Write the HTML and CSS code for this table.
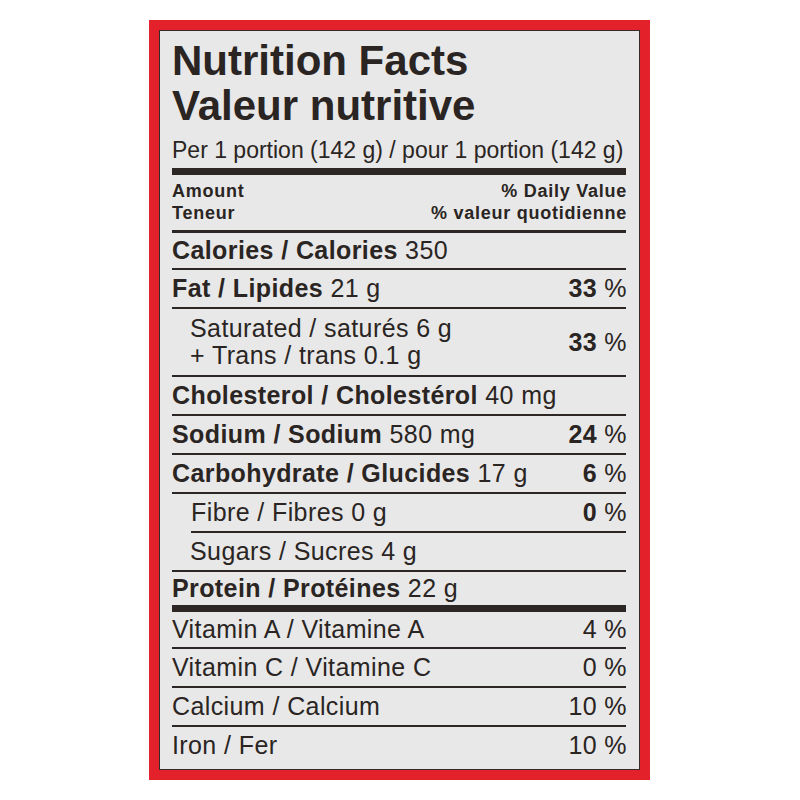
FILE: index.html
```html
<!DOCTYPE html>
<html lang="en">
<head>
<meta charset="utf-8">
<title>Nutrition Facts</title>
<link rel="stylesheet" href="styles.css">
</head>
<body>
<div class="label">
  <div class="panel">
    <h1 class="title">Nutrition Facts<br>Valeur nutritive</h1>
    <div class="serving">Per 1 portion (142 g) / pour 1 portion (142 g)</div>
    <div class="head">
      <div class="head-l">Amount<br>Teneur</div>
      <div class="head-r">% Daily Value<br>% valeur quotidienne</div>
    </div>
    <div class="row calories"><span><b>Calories / Calories</b> 350</span></div>
    <div class="row"><span><b>Fat / Lipides</b> 21 g</span><span class="dv"><b>33</b> %</span></div>
    <div class="row sub two"><span class="lines">Saturated / saturés 6 g<br>+ Trans / trans 0.1 g</span><span class="dv"><b>33</b> %</span></div>
    <div class="row"><span><b>Cholesterol / Cholestérol</b> 40 mg</span></div>
    <div class="row"><span><b>Sodium / Sodium</b> 580 mg</span><span class="dv"><b>24</b> %</span></div>
    <div class="row"><span><b>Carbohydrate / Glucides</b> 17 g</span><span class="dv"><b>6</b> %</span></div>
    <div class="row fibre"><span>Fibre / Fibres 0 g</span><span class="dv"><b>0</b> %</span></div>
    <div class="row sub"><span>Sugars / Sucres 4 g</span></div>
    <div class="row protein"><span><b>Protein / Protéines</b> 22 g</span></div>
    <div class="row vit"><span>Vitamin A / Vitamine A</span><span class="dv">4 %</span></div>
    <div class="row"><span>Vitamin C / Vitamine C</span><span class="dv">0 %</span></div>
    <div class="row"><span>Calcium / Calcium</span><span class="dv">10 %</span></div>
    <div class="row last"><span>Iron / Fer</span><span class="dv">10 %</span></div>
  </div>
</div>
</body>
</html>
```
FILE: styles.css
```css
html, body {
  margin: 0;
  padding: 0;
  background: #ffffff;
}

body {
  font-family: "Liberation Sans", Arial, sans-serif;
  color: #2a2523;
}

.label {
  margin: 20px 0 0 149px;
  width: 501px;
  box-sizing: border-box;
  border: 10px solid #e3212a;
}

.panel {
  border: 1px solid #3a2b2b;
  background: #e8e8e8;
  padding: 7px 13px 5px 12px;
}

.title {
  margin: 0;
  font-size: 42px;
  line-height: 45px;
  font-weight: bold;
}

.serving {
  margin-top: 8px;
  font-size: 23px;
  line-height: 28px;
  padding-bottom: 4px;
  border-bottom: 7px solid #2c2725;
  white-space: nowrap;
}

.head {
  display: flex;
  justify-content: space-between;
  padding: 5px 0 6px;
  border-bottom: 3px solid #2c2725;
  font-size: 18px;
  line-height: 22px;
  font-weight: bold;
  letter-spacing: 0.75px;
}

.head-r {
  text-align: right;
  margin-right: -1px;
}

.row {
  display: flex;
  justify-content: space-between;
  align-items: center;
  height: 37px;
  font-size: 25px;
  line-height: 37px;
  letter-spacing: 0.4px;
  border-bottom: 2px solid #2c2725;
  white-space: nowrap;
}

.row.calories {
  height: 35px;
}

.row.sub {
  padding-left: 18px;
}

.row.two {
  height: 66px;
}

.row.two .lines {
  line-height: 27px;
}

.row.fibre {
  margin-left: 19px;
}

.row.protein {
  height: 33px;
  border-bottom-width: 7px;
}

.row.vit {
  height: 35px;
}

.row.last {
  border-bottom: none;
}

.dv {
  margin-right: -1px;
}
```
